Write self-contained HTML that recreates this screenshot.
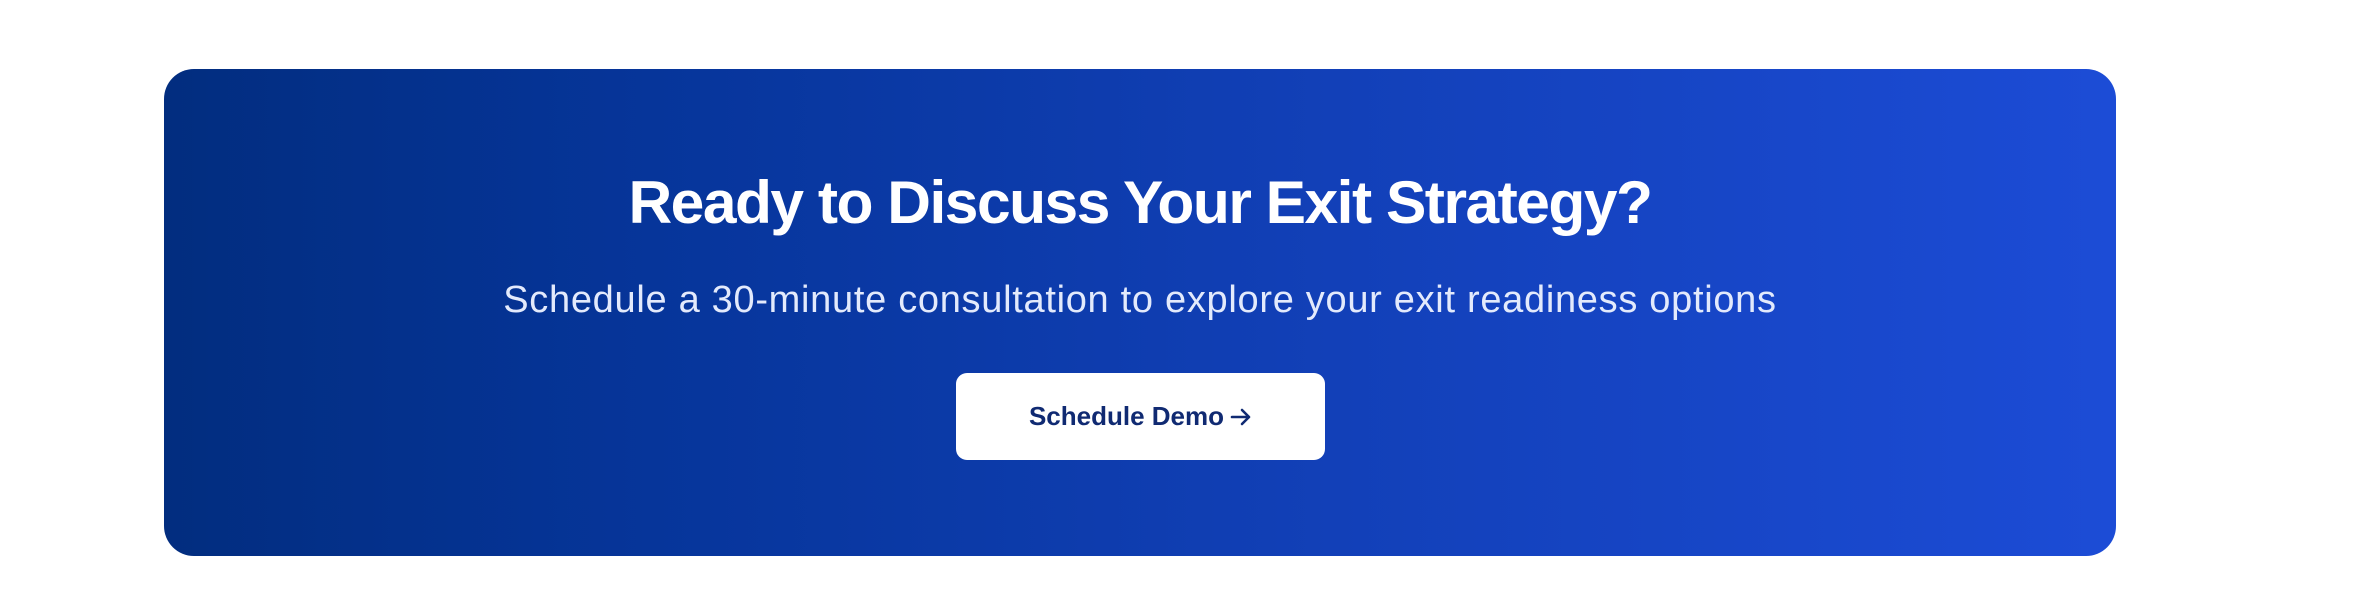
<!DOCTYPE html>
<html><head><style>
html,body{margin:0;padding:0;background:#fff;width:2358px;height:596px;overflow:hidden;font-family:"Liberation Sans",sans-serif}
.card{position:absolute;left:164px;top:69px;width:1952px;height:487px;border-radius:30px;background:linear-gradient(90deg,#022d7f 0%,#06359a 25%,#1240b8 60%,#1c4cd6 100%)}
.c{position:absolute;left:164px;width:1952px;text-align:center;margin:0}
h1{top:166px;color:#fff;font-size:60.5px;font-weight:bold;letter-spacing:-1.5px;line-height:72px}
p{top:277px;color:#e3eafc;font-size:38px;letter-spacing:0.7px;line-height:46px}
.btn{position:absolute;left:956px;top:373px;width:369px;height:87px;background:#fff;border-radius:11px;color:#102a72;font-size:26px;font-weight:bold;text-align:center;line-height:87px}
.btn svg{vertical-align:-3px;margin-left:6px}
</style></head><body>
<div class="card"></div>
<h1 class="c">Ready to Discuss Your Exit Strategy?</h1>
<p class="c">Schedule a 30-minute consultation to explore your exit readiness options</p>
<div class="btn">Schedule Demo<svg width="22" height="22" viewBox="0 0 22 22"><path d="M2 11H19M12 4L19 11L12 18" fill="none" stroke="#102a72" stroke-width="2.6" stroke-linecap="round" stroke-linejoin="round"/></svg></div>
</body></html>
